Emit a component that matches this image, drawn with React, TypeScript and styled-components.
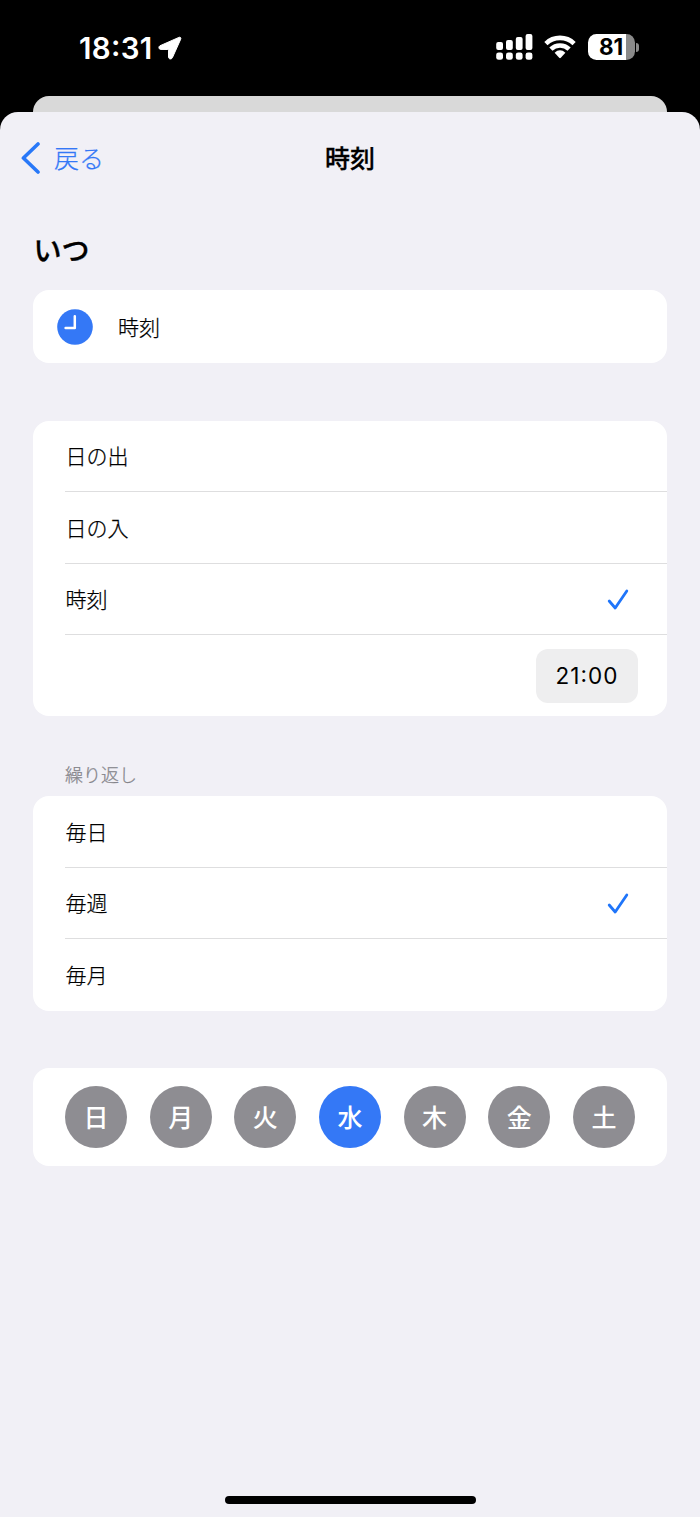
import React from "react";
import styled, { createGlobalStyle } from "styled-components";

const BLUE = "#3478f6";

const GlobalStyle = createGlobalStyle`
  * { box-sizing: border-box; }
  body {
    margin: 0;
    background: #000;
    color: #000;
    font-family: Inter, "Noto Sans CJK JP", sans-serif;
  }
`;

const Screen = styled.main`
  width: 700px;
  height: 1517px;
  display: flex;
  flex-direction: column;
  overflow: hidden;
  background: #000;
`;

const StatusBar = styled.header`
  height: 96px;
  flex: none;
  display: flex;
  align-items: flex-start;
  justify-content: space-between;
  padding: 30px 61px 0 79px;
  color: #fff;
`;

const Clock = styled.div`
  display: flex;
  align-items: center;
  height: 35px;
  gap: 5px;
  font-size: 29.5px;
  font-weight: 600;
  font-feature-settings: "case" 1;
  letter-spacing: 0.3px;
`;

const Indicators = styled.div`
  display: flex;
  align-items: center;
  height: 34px;
`;

const WifiIcon = styled.svg`
  margin: 0 12px 0 11px;
`;

const Battery = styled.div`
  width: 47px;
  height: 26px;
  padding-right: 1px;
  border-radius: 8.5px;
  background: linear-gradient(90deg, #fff 0 38px, #8a8a8a 38px);
  color: #000;
  display: flex;
  align-items: center;
  justify-content: center;
  font-size: 22.5px;
  line-height: 26px;
  font-weight: 700;
  letter-spacing: -0.2px;
`;

const BatteryCap = styled.div`
  width: 3px;
  height: 9px;
  margin-left: 1px;
  border-radius: 0 3px 3px 0;
  background: #8a8a8a;
`;

const SheetBehind = styled.div`
  height: 16px;
  flex: none;
  margin: 0 33px;
  border-radius: 16px 16px 0 0;
  background: #d9d9d9;
`;

const Sheet = styled.section`
  flex: 1;
  display: flex;
  flex-direction: column;
  border-radius: 18px 18px 0 0;
  background: #f1f0f6;
  padding: 0 33px;
`;

const NavBar = styled.nav`
  height: 92px;
  margin: 0 -33px;
  padding: 0 21px;
  display: grid;
  grid-template-columns: 1fr auto 1fr;
  align-items: center;
`;

const BackButton = styled.button`
  display: flex;
  align-items: center;
  gap: 14px;
  padding: 0;
  border: 0;
  background: none;
  color: ${BLUE};
  font: 300 25px/36px "Noto Sans CJK JP", sans-serif;
  -webkit-text-stroke: 0.25px;
`;

const BackLabel = styled.span`
  padding-bottom: 3px;
`;

const Title = styled.h1`
  margin: 0;
  padding-top: 1px;
  font-size: 25px;
  line-height: 36px;
  font-weight: 500;
  -webkit-text-stroke: 0.3px #000;
`;

const Heading = styled.h2`
  margin: 27px 0 18px 0.5px;
  font-size: 28px;
  line-height: 41px;
  font-weight: 500;
  -webkit-text-stroke: 0.3px #000;
`;

const Card = styled.div<{ $height: number; $gap?: number }>`
  flex: none;
  height: ${(p) => p.$height}px;
  margin-top: ${(p) => p.$gap ?? 0}px;
  border-radius: 16px;
  background: #fff;
`;

const TriggerCard = styled(Card)`
  display: flex;
  align-items: center;
  gap: 25px;
  padding-left: 24px;
`;

const Label = styled.span`
  padding-bottom: 1px;
  font: 300 21px/32px "Noto Sans CJK JP", sans-serif;
  -webkit-text-stroke: 0.25px;
`;

const Row = styled.div<{ $divided?: boolean; $height?: number }>`
  height: ${(p) => p.$height ?? 71.6}px;
  margin-left: 32px;
  padding: 0 38px 0 0.5px;
  display: flex;
  align-items: center;
  justify-content: space-between;
  border-bottom: ${(p) => (p.$divided ? "1px solid #dededf" : "0")};
`;

const TimeRow = styled(Row)`
  justify-content: flex-end;
  padding-right: 29px;
`;

const TimeButton = styled.button`
  width: 102px;
  height: 54px;
  padding: 0;
  border: 0;
  border-radius: 12px;
  background: #eeeeef;
  color: #000;
  font: 400 22.5px/54px Inter, sans-serif;
  font-feature-settings: "case" 1;
  letter-spacing: 1.1px;
`;

const Caption = styled.h3`
  margin: 45px 0 5px 32px;
  height: 30px;
  color: #85858b;
  font-size: 18px;
  line-height: 30px;
  font-weight: 300;
  -webkit-text-stroke: 0.25px;
`;

const Days = styled(Card)`
  display: flex;
  align-items: center;
  justify-content: space-between;
  padding: 0 32px;
`;

const Day = styled.button<{ $selected: boolean }>`
  width: 62px;
  height: 62px;
  padding: 0 0 2px;
  border: 0;
  border-radius: 50%;
  background: ${(p) => (p.$selected ? BLUE : "#8e8d92")};
  color: #fff;
  font: 500 25px/60px "Noto Sans CJK JP", sans-serif;
`;

const HomeIndicator = styled.div`
  width: 251px;
  height: 8px;
  margin: auto auto 13px;
  border-radius: 4px;
  background: #000;
`;

const Check = () => (
  <svg width="22" height="22" viewBox="0 0 22 22" fill="none" stroke="#1f75fa" strokeWidth="2.8" strokeLinecap="round" strokeLinejoin="round">
    <path d="M2.2 13 L8.2 20 L19.8 3" />
  </svg>
);

const LocationArrow = () => (
  <svg width="24" height="24" viewBox="0 0 24 24" fill="#fff" stroke="#fff" strokeWidth="1" strokeLinejoin="round">
    <path d="M20.9 1.4 1.9 9.8C.4 10.6 .6 13.2 2.4 13.4L9.8 13.5Q10.5 13.5 10.5 14.2V21C10.6 23.3 13.4 23.6 14.4 21.7L22.7 3.2C23.3 1.7 22.2 .8 20.9 1.4Z" />
  </svg>
);

const Signal = () => (
  <svg width="37" height="26" viewBox="0 0 37 26" fill="#fff">
    {[8, 6, 3, 0].map((top, i) => (
      <React.Fragment key={top}>
        <rect x={0.2 + i * 9.8} y={top} width="6.8" height={16 - top} rx="2" />
        <rect x={0.2 + i * 9.8} y="18.4" width="6.8" height="7.4" rx="2.4" />
      </React.Fragment>
    ))}
  </svg>
);

const Wifi = () => (
  <WifiIcon width="32" height="24" viewBox="0 0 32 24">
    <g fill="none" stroke="#fff" strokeWidth="4.6">
      <path d="M1.9 8.6 A20.3 20.3 0 0 1 30.1 8.6" />
      <path d="M6.9 14.2 A13 13 0 0 1 25.1 14.2" />
    </g>
    <path fill="#fff" d="M10.6 17.7 Q16 12.9 21.4 17.7 L16.8 22.8 Q16 23.5 15.2 22.8Z" />
  </WifiIcon>
);

const ClockFace = () => (
  <svg width="36" height="36" viewBox="0 0 36 36">
    <circle cx="18" cy="18" r="17.8" fill={BLUE} />
    <path d="M17.8 7.2V18.9H8.6" fill="none" stroke="#fff" strokeWidth="2.5" strokeLinecap="round" strokeLinejoin="round" />
  </svg>
);

const times = ["日の出", "日の入", "時刻"];
const repeats = ["毎日", "毎週", "毎月"];
const days = ["日", "月", "火", "水", "木", "金", "土"];

export default function App() {
  return (
    <Screen>
      <GlobalStyle />
      <StatusBar>
        <Clock>
          <span>18:31</span>
          <LocationArrow />
        </Clock>
        <Indicators>
          <Signal />
          <Wifi />
          <Battery>81</Battery>
          <BatteryCap />
        </Indicators>
      </StatusBar>
      <SheetBehind />
      <Sheet>
        <NavBar>
          <BackButton>
            <svg width="19" height="32" viewBox="0 0 19 32" fill="none" stroke="#2878f8" strokeWidth="3.6" strokeLinecap="round" strokeLinejoin="round">
              <path d="M17 2 2.4 16 17 30" />
            </svg>
            <BackLabel>戻る</BackLabel>
          </BackButton>
          <Title>時刻</Title>
        </NavBar>
        <Heading>いつ</Heading>
        <TriggerCard $height={73}>
          <ClockFace />
          <Label>時刻</Label>
        </TriggerCard>
        <Card $height={295.5} $gap={57.5}>
          {times.map((label) => (
            <Row key={label} $divided>
              <Label>{label}</Label>
              {label === "時刻" && <Check />}
            </Row>
          ))}
          <TimeRow $height={81}>
            <TimeButton>21:00</TimeButton>
          </TimeRow>
        </Card>
        <Caption>繰り返し</Caption>
        <Card $height={214.5}>
          {repeats.map((label, i) => (
            <Row key={label} $divided={i < repeats.length - 1}>
              <Label>{label}</Label>
              {label === "毎週" && <Check />}
            </Row>
          ))}
        </Card>
        <Days $height={97.5} $gap={57.5}>
          {days.map((day) => (
            <Day key={day} $selected={day === "水"}>
              {day}
            </Day>
          ))}
        </Days>
        <HomeIndicator />
      </Sheet>
    </Screen>
  );
}
